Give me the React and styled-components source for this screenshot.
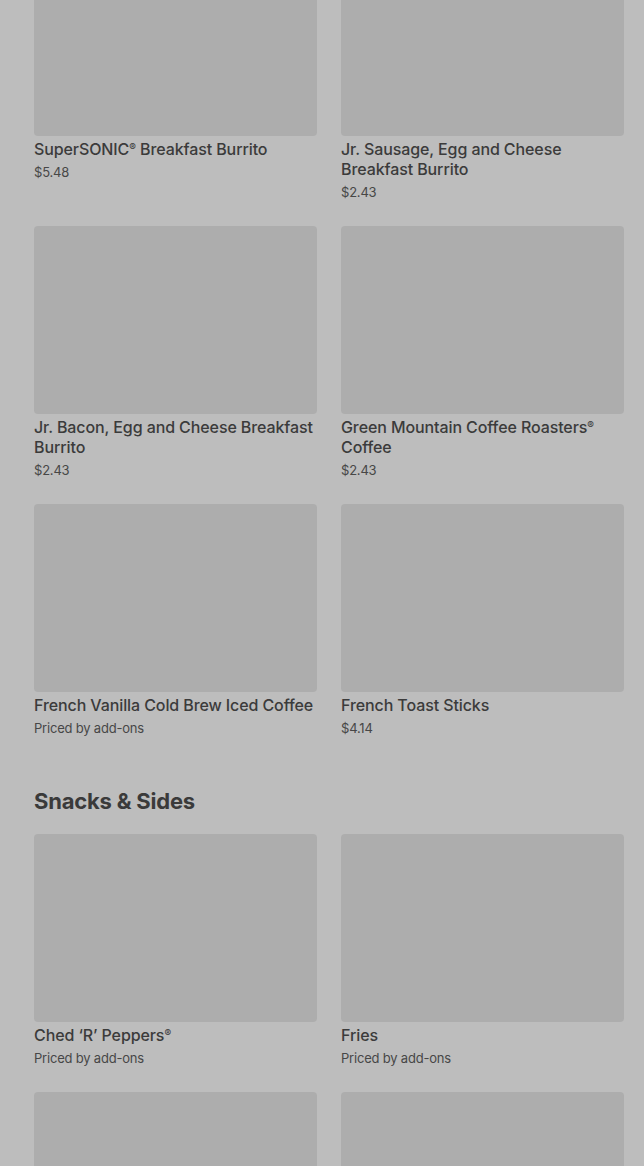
import React from 'react'
import styled, { createGlobalStyle } from 'styled-components'

const GlobalStyle = createGlobalStyle`
  html, body {
    margin: 0;
    padding: 0;
    background: #bdbdbd;
  }
  body {
    font-family: Inter, "Noto Sans", sans-serif;
    overflow: hidden;
  }
`

const StyledMenu = styled.main`
  width: 100%;
  height: 1166px;
  overflow: hidden;
  box-sizing: border-box;
  padding: 0 20px 0 34px;
  .menu__scroll {
    margin-top: -52px;
  }
`

const Section = styled.section`
  display: flex;
  flex-direction: column;
  margin-bottom: ${(p) => (p.last ? '0' : '48px')};
  h2 {
    margin: 0 0 18px;
    font-family: Inter, "Noto Sans", sans-serif;
    font-size: 22px;
    font-weight: 700;
    letter-spacing: -0.2px;
    line-height: 30px;
    color: #3a3a3a;
  }
`

const Grid = styled.div`
  display: grid;
  grid-template-columns: 1fr 1fr;
  column-gap: 24px;
  row-gap: 24px;
`

const Card = styled.div`
  display: flex;
  flex-direction: column;
  .card__image {
    height: 188px;
    border-radius: 4px;
    background: #adadad;
  }
  h3 {
    margin: 3px 0 0;
    font-size: 16px;
    font-weight: 500;
    line-height: 20px;
    color: #3b3b3b;
    letter-spacing: -0.1px;
  }
  .card__price {
    margin: 3px 0 0;
    font-size: 13px;
    line-height: 20px;
    color: #474747;
    letter-spacing: -0.2px;
  }
`

const Reg = styled.sup`
  font-size: 10px;
  vertical-align: top;
  position: relative;
  top: -2px;
`

const breakfast = [
  { name: <>SuperSONIC<Reg>®</Reg> Breakfast Burrito</>, price: '$5.48' },
  { name: 'Jr. Sausage, Egg and Cheese Breakfast Burrito', price: '$2.43' },
  { name: 'Jr. Bacon, Egg and Cheese Breakfast Burrito', price: '$2.43' },
  { name: <>Green Mountain Coffee Roasters<Reg>®</Reg> Coffee</>, price: '$2.43' },
  { name: 'French Vanilla Cold Brew Iced Coffee', price: 'Priced by add-ons' },
  { name: 'French Toast Sticks', price: '$4.14' },
]

// the last row is scrolled past the bottom edge: only its images show
const snacks = [
  { name: <>Ched ‘R’ Peppers<Reg>®</Reg></>, price: 'Priced by add-ons' },
  { name: 'Fries', price: 'Priced by add-ons' },
  {},
  {},
]

const MenuCard = ({ item }) => (
  <Card>
    <div className="card__image" />
    {item.name && <h3>{item.name}</h3>}
    {item.price && <p className="card__price">{item.price}</p>}
  </Card>
)

const App = () => {
  return (
    <>
      <GlobalStyle />
      <StyledMenu>
        <div className="menu__scroll">
          <Section>
            <Grid>
              {breakfast.map((item, i) => (
                <MenuCard key={i} item={item} />
              ))}
            </Grid>
          </Section>
          <Section last>
            <h2>Snacks &amp; Sides</h2>
            <Grid>
              {snacks.map((item, i) => (
                <MenuCard key={i} item={item} />
              ))}
            </Grid>
          </Section>
        </div>
      </StyledMenu>
    </>
  )
}

export default App
